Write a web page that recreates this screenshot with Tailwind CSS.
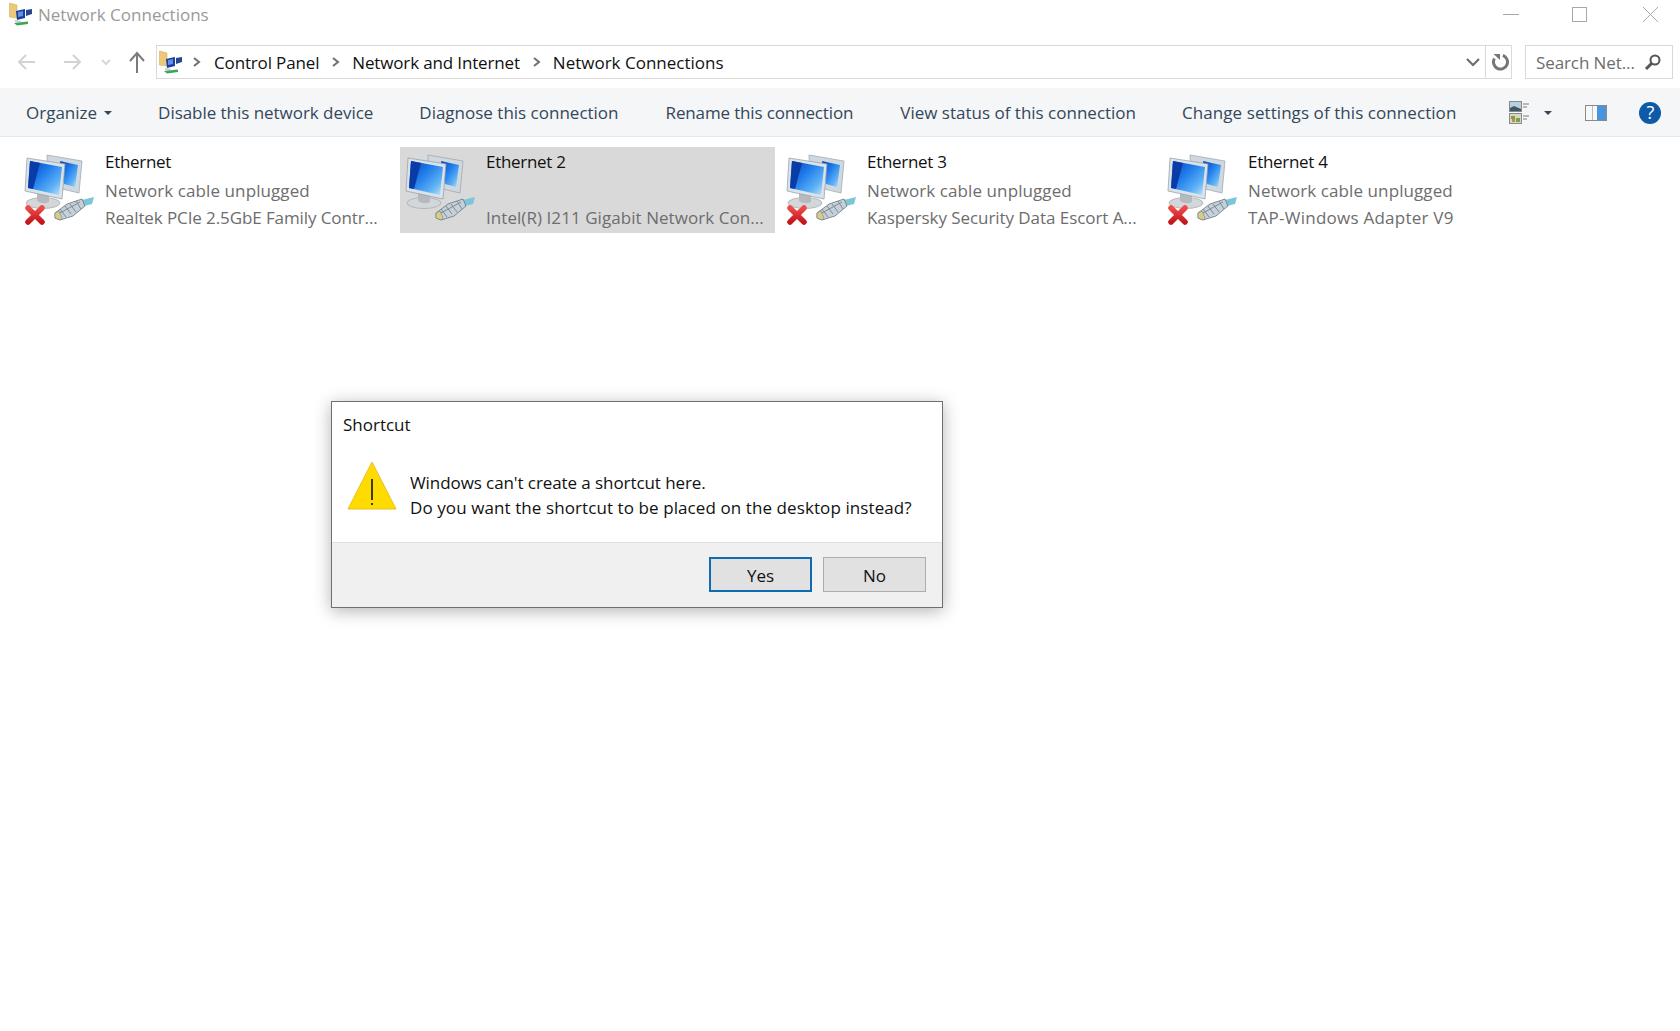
<!DOCTYPE html>
<html lang="en">
<head>
    <meta charset="UTF-8">
    <title>Network Connections</title>
    <script src="https://cdn.jsdelivr.net/npm/@tailwindcss/browser@4"></script>
</head>
<body class="bg-white">
    <!-- shared icons -->
    <svg width="0" height="0" class="absolute">
        <defs>
            <linearGradient id="screen" x1="0" y1="0" x2="1" y2="1">
                <stop offset="0" stop-color="#0a3fb4"/>
                <stop offset="0.4" stop-color="#1f7ceb"/>
                <stop offset="0.75" stop-color="#5fb2f5"/>
                <stop offset="1" stop-color="#c5e6fb"/>
            </linearGradient>
            <linearGradient id="cross" x1="0" y1="0" x2="0" y2="1">
                <stop offset="0" stop-color="#ef4a4a"/>
                <stop offset="1" stop-color="#c4161c"/>
            </linearGradient>
            <symbol id="net" viewBox="14 9 81 72">
                <!-- back monitor -->
                <path d="M37 14 L72 20 L69 52 L52 48 L38 40 Z" fill="#cfd8df" stroke="#97a3ad" stroke-width="0.7"/>
                <path d="M50 20 L68 24 L65 46 L54 43 Z" fill="url(#screen)"/>
                <!-- stand -->
                <ellipse cx="33" cy="62" rx="17" ry="5.5" fill="#d4d7d9" stroke="#a4a8ab" stroke-width="0.7"/>
                <path d="M27 52 L39 54 L39 61 Q33 64 27 60 Z" fill="#b4babf"/>
                <!-- front monitor -->
                <path d="M17 17 L55 23 L52 58 L15 50 Z" fill="#dbe2e8" stroke="#8f9ba5" stroke-width="0.7"/>
                <path d="M20 20 L52 26 L49 54 L18 47 Z" fill="url(#screen)"/>
                <path d="M20 20 L30 22 L23 48 L18 47 Z" fill="#0a3ca8"/>
                <!-- plug -->
                <path d="M72 59 L84 56 L82 63 L74 65 Z" fill="#7cc6da"/>
                <path d="M45 72 L57 63 L72 58 L75 65 L63 75 L50 79 L45 77 Z" fill="#c6d0d8" stroke="#66757f" stroke-width="0.8"/>
                <path d="M50 68 L56 76 M55 65 L61 73 M60 63 L66 71 M66 60 L71 68 M48 73 L70 61" stroke="#7d8b95" stroke-width="1"/>
                <path d="M45 72 L49 70 L52 77 L50 79 L45 77 Z" fill="#d9cd86" stroke="#66757f" stroke-width="0.5"/>
            </symbol>
            <symbol id="redx" viewBox="0 0 22 22">
                <path d="M4 4 L18 18 M18 4 L4 18" stroke="url(#cross)" stroke-width="5.5" stroke-linecap="round"/>
            </symbol>
            <symbol id="folder" viewBox="0 0 24 24">
                <path d="M0.5 1 L8 3 L8 16 L0.5 15 Z" fill="#ecc878" stroke="#c9a955" stroke-width="0.5"/>
                <path d="M7 9 L16 7 L16 16 L8 18 Z" fill="#1b3e9c"/>
                <path d="M9 10 L14 9 L14 14 L9 15 Z" fill="#5b94e6"/>
                <path d="M17 8 L23 7 L23 12 L17 14 Z" fill="#26468f"/>
                <path d="M6 18 L12 19 L11 20.5 L6 20 Z" fill="#c7ccd0"/>
                <path d="M5 21 L19 19.5 L19 22 L8 23.5 Z" fill="#3aa858"/>
            </symbol>
        </defs>
    </svg>

    <div class="relative h-[1031px] w-[1680px] overflow-hidden font-['Open_Sans',sans-serif]">
        <!-- title bar -->
        <div class="flex h-[45px] items-start">
            <svg class="ml-[9px] mt-[2px] h-6 w-6"><use href="#folder"/></svg>
            <span class="ml-[5px] mt-[2px] text-[17px] leading-[26px] text-[#9a9a9a]">Network Connections</span>
            <div class="ml-auto flex">
                <svg width="18" height="28" viewBox="0 0 18 28" class="mr-[50px]"><path d="M0 14.5H16" stroke="#a8a8a8"/></svg>
                <svg width="18" height="28" viewBox="0 0 18 28" class="mr-[53px]"><rect x="1.5" y="7.5" width="14" height="14" fill="none" stroke="#a8a8a8"/></svg>
                <svg width="18" height="28" viewBox="0 0 18 28" class="mr-[20px]"><path d="M1 7L16 22M16 7L1 22" stroke="#a8a8a8"/></svg>
            </div>
        </div>

        <!-- address row -->
        <div class="flex h-[34px] items-center">
            <svg width="24" height="20" viewBox="0 0 24 20" class="ml-[15px]"><path d="M20 10H4M11 3L4 10L11 17" fill="none" stroke="#d2d2d2" stroke-width="2"/></svg>
            <svg width="24" height="20" viewBox="0 0 24 20" class="ml-[22px]"><path d="M3 10H19M12 3L19 10L12 17" fill="none" stroke="#d2d2d2" stroke-width="2"/></svg>
            <svg width="12" height="8" viewBox="0 0 12 8" class="ml-[15px]"><path d="M2 2L6 6L10 2" fill="none" stroke="#d8d8d8" stroke-width="2"/></svg>
            <svg width="20" height="24" viewBox="0 0 20 24" class="ml-[15px]"><path d="M10 23V4M3 11L10 3L17 11" fill="none" stroke="#7b7b7b" stroke-width="2"/></svg>
            <div class="ml-[9px] flex h-[34px] w-[1356px] items-center border border-[#d9d9d9]">
                <svg class="ml-[2px] h-6 w-6"><use href="#folder"/></svg>
                <svg width="10" height="12" viewBox="0 0 10 12" class="ml-[9px]"><path d="M2 2L7 6L2 10" fill="none" stroke="#707070" stroke-width="2"/></svg>
                <span class="ml-[12px] pt-[1px] text-[17px] tracking-[-0.15px] text-[#111]">Control Panel</span>
                <svg width="10" height="12" viewBox="0 0 10 12" class="ml-[12px]"><path d="M2 2L7 6L2 10" fill="none" stroke="#707070" stroke-width="2"/></svg>
                <span class="ml-[11px] pt-[1px] text-[17px] tracking-[-0.15px] text-[#111]">Network and Internet</span>
                <svg width="10" height="12" viewBox="0 0 10 12" class="ml-[12px]"><path d="M2 2L7 6L2 10" fill="none" stroke="#707070" stroke-width="2"/></svg>
                <span class="ml-[11px] pt-[1px] text-[17px] text-[#111]">Network Connections</span>
                <svg width="14" height="10" viewBox="0 0 14 10" class="ml-auto mr-[5px]"><path d="M1 2L7 8L13 2" fill="none" stroke="#6e6e6e" stroke-width="2.2"/></svg>
                <div class="flex h-full w-[26px] items-center justify-center border-l border-[#d9d9d9] pl-[5px]">
                    <svg width="18" height="18" viewBox="0 0 18 18"><path d="M4 3.5A7 7 0 1 0 13 3.5" fill="none" stroke="#767676" stroke-width="3" transform="rotate(-20 9 9)"/><path d="M1.5 1L8 1L8 7Z" fill="#767676"/></svg>
                </div>
            </div>
            <div class="ml-[13px] flex h-[34px] w-[148px] items-center border border-[#d9d9d9] pl-[10px]">
                <span class="pt-[1px] text-[17px] tracking-[-0.1px] text-[#6d6d6d]">Search Net...</span>
                <svg width="18" height="18" viewBox="0 0 18 18" class="ml-auto mr-[10px]"><circle cx="11" cy="7" r="4.5" fill="none" stroke="#555" stroke-width="2"/><path d="M8 10L2 16" stroke="#555" stroke-width="3"/></svg>
            </div>
        </div>

        <!-- command bar -->
        <div class="mt-[9px] flex h-[49px] items-center border-b border-[#e6e8ea] bg-[#f5f6f7] pt-[1px] text-[17px] text-[#33475b]">
            <span class="ml-[26px]">Organize</span>
            <span class="ml-[7px] h-0 w-0 border-x-[4px] border-t-[4px] border-x-transparent border-t-[#33475b]"></span>
            <span class="ml-[46px] tracking-[-0.04px]">Disable this network device</span>
            <span class="ml-[46px]">Diagnose this connection</span>
            <span class="ml-[47px] tracking-[-0.14px]">Rename this connection</span>
            <span class="ml-[47px]">View status of this connection</span>
            <span class="ml-[46px] tracking-[0.07px]">Change settings of this connection</span>
            <svg width="22" height="24" viewBox="0 0 22 24" class="ml-[53px]">
                <rect x="0.5" y="0.5" width="12" height="10" fill="#b9cfdc" stroke="#8a8a8a"/>
                <path d="M1 10L1 7L5 5L12 8V10Z" fill="#3d5a66"/>
                <rect x="0.5" y="12.5" width="12" height="10" fill="#d8d8c8" stroke="#8a8a8a"/>
                <path d="M2 15H6V18H2ZM7 17H11V21H7Z" fill="#7aa04a"/>
                <path d="M3 18H6V21H3Z" fill="#c98a3a"/>
                <path d="M14 3H20M14 6H18M14 15H20M14 18H18" stroke="#7a7a7a"/>
            </svg>
            <span class="ml-[13px] h-0 w-0 border-x-[4px] border-t-[4px] border-x-transparent border-t-[#33475b]"></span>
            <svg width="22" height="18" viewBox="0 0 22 18" class="ml-[33px]">
                <rect x="0.5" y="1.5" width="21" height="15" fill="#f8f8f8" stroke="#8a8a8a"/>
                <rect x="12" y="2" width="9" height="14" fill="#4a94dc"/>
                <path d="M7.5 2V16" stroke="#bcbcbc"/>
            </svg>
            <div class="ml-[32px] flex h-[22px] w-[22px] items-center justify-center rounded-full bg-[#0d5aa7] text-[18px] text-white">?</div>
        </div>

        <!-- connection list -->
        <div class="mt-[10px] ml-[19px] grid grid-cols-[repeat(4,381px)]">
            <div class="flex h-[86px] w-[375px]">
                <div class="relative mt-[3px] ml-[5px] h-[80px] w-[81px]">
                    <svg class="h-[72px] w-[81px]"><use href="#net"/></svg>
                    <svg class="absolute left-0 top-[54px] h-[22px] w-[22px]"><use href="#redx"/></svg>
                </div>
                <div class="text-[17px] leading-[27.5px]">
                    <div class="mt-[1px] mb-[1px] tracking-[-0.3px] text-[#111]">Ethernet</div>
                    <div class="tracking-[0.09px] text-[#6d6d6d]">Network cable unplugged</div>
                    <div class="tracking-[-0.1px] text-[#6d6d6d]">Realtek PCIe 2.5GbE Family Contr...</div>
                </div>
            </div>
            <div class="flex h-[86px] w-[375px] bg-[#d9d9d9]">
                <div class="relative mt-[3px] ml-[5px] h-[80px] w-[81px]">
                    <svg class="h-[72px] w-[81px]"><use href="#net"/></svg>
                </div>
                <div class="text-[17px] leading-[27.5px]">
                    <div class="mt-[1px] mb-[1px] tracking-[-0.3px] text-[#111]">Ethernet 2</div>
                    <div>&nbsp;</div>
                    <div class="tracking-[0.06px] text-[#6d6d6d]">Intel(R) I211 Gigabit Network Con...</div>
                </div>
            </div>
            <div class="flex h-[86px] w-[375px]">
                <div class="relative mt-[3px] ml-[5px] h-[80px] w-[81px]">
                    <svg class="h-[72px] w-[81px]"><use href="#net"/></svg>
                    <svg class="absolute left-0 top-[54px] h-[22px] w-[22px]"><use href="#redx"/></svg>
                </div>
                <div class="text-[17px] leading-[27.5px]">
                    <div class="mt-[1px] mb-[1px] tracking-[-0.3px] text-[#111]">Ethernet 3</div>
                    <div class="tracking-[0.09px] text-[#6d6d6d]">Network cable unplugged</div>
                    <div class="tracking-[-0.06px] text-[#6d6d6d]">Kaspersky Security Data Escort A...</div>
                </div>
            </div>
            <div class="flex h-[86px] w-[375px]">
                <div class="relative mt-[3px] ml-[5px] h-[80px] w-[81px]">
                    <svg class="h-[72px] w-[81px]"><use href="#net"/></svg>
                    <svg class="absolute left-0 top-[54px] h-[22px] w-[22px]"><use href="#redx"/></svg>
                </div>
                <div class="text-[17px] leading-[27.5px]">
                    <div class="mt-[1px] mb-[1px] tracking-[-0.3px] text-[#111]">Ethernet 4</div>
                    <div class="tracking-[0.09px] text-[#6d6d6d]">Network cable unplugged</div>
                    <div class="tracking-[0.24px] text-[#6d6d6d]">TAP-Windows Adapter V9</div>
                </div>
            </div>
        </div>

        <!-- dialog -->
        <div class="absolute left-[331px] top-[401px] h-[207px] w-[612px] border border-[#6f6f6f] bg-white shadow-[0_3px_16px_rgba(0,0,0,0.3)]">
            <div class="ml-[11px] mt-[11px] text-[17px] leading-[24px] text-[#111]">Shortcut</div>
            <div class="mt-[21px] flex h-[84px]">
                <svg width="50" height="50" viewBox="0 0 50 50" class="ml-[15px] mt-[2px]">
                    <path d="M25 2L49 49H1Z" fill="#ffdc00" stroke="#eabf2a"/>
                    <path d="M25 19V40M25 43V45" stroke="#111" stroke-width="1.6"/>
                </svg>
                <div class="ml-[13px] mt-[12px] text-[17px] leading-[25px] text-[#111]">
                    <div class="tracking-[-0.08px]">Windows can't create a shortcut here.</div>
                    <div class="tracking-[0.09px]">Do you want the shortcut to be placed on the desktop instead?</div>
                </div>
            </div>
            <div class="flex h-[65px] items-center justify-end gap-[11px] border-t border-[#dfdfdf] bg-[#f0f0f0] pb-[2px] pr-[16px]">
                <button class="h-[35px] w-[103px] border-2 border-[#0f6cb0] bg-[#e1e1e1] pt-[3px] text-[17px] text-[#111]">Yes</button>
                <button class="h-[35px] w-[103px] border border-[#adadad] bg-[#e1e1e1] pt-[3px] text-[17px] text-[#111]">No</button>
            </div>
        </div>
    </div>
</body>
</html>
